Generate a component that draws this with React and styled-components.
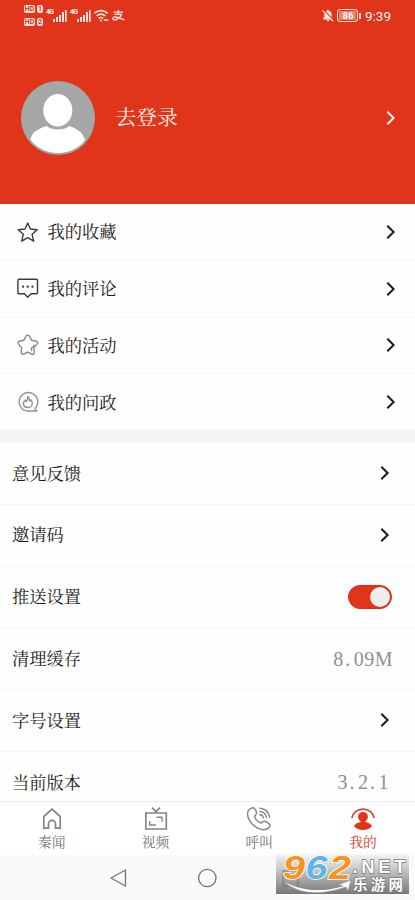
import React from "react";
import styled, { createGlobalStyle } from "styled-components";

const RED = "#e0351b";
const SERIF = '"Liberation Serif", "Noto Serif CJK SC", "Noto Serif SC", "Noto Sans CJK SC", serif';

const GlobalStyle = createGlobalStyle`
  * { box-sizing: border-box; }
  body { margin: 0; background: #fff; font-family: ${SERIF}; }
  svg { display: block; flex: none; overflow: visible; }
`;

const Screen = styled.div`
  width: 415px;
  height: 900px;
  display: flex;
  flex-direction: column;
  overflow: hidden;
  background: #fefefe;
`;

const Header = styled.header`
  height: 204px;
  flex: none;
  background: ${RED};
  color: #fff4f0;
`;

const StatusBar = styled.div`
  height: 31px;
  padding: 0 24px;
  display: flex;
  justify-content: space-between;
  font-family: Roboto, sans-serif;
`;

const StatusGroup = styled.div`
  display: flex;
  align-items: center;
  gap: ${(p) => p.$gap}px;
`;

const HdStack = styled.div`
  display: grid;
  grid-template-columns: 11px 6px;
  gap: 5px 2px;
`;

const HdBadge = styled.span`
  height: 8px;
  border-radius: 2px;
  background: #ffe3db;
  color: ${RED};
  font-size: 7px;
  font-weight: 700;
  line-height: 8px;
  text-align: center;
`;

const Signal = styled.div`
  display: flex;
  align-items: flex-start;
  height: 13px;
`;

const SignalLabel = styled.span`
  font-size: 7px;
  line-height: 7px;
  font-weight: 700;
  width: 7px;
  letter-spacing: -0.7px;
`;

const Battery = styled.span`
  width: 21px;
  height: 13px;
  margin-left: 3px;
  border: 1px solid #ffe3db;
  border-radius: 3px;
  background: #ec8270;
  font-size: 9.5px;
  line-height: 11px;
  font-weight: 700;
  text-align: center;
  box-shadow: inset 0 0 0 1px ${RED};
`;

const BatteryTip = styled.span`
  width: 1.5px;
  height: 6px;
  margin-left: 1px;
  background: #ffe3db;
`;

const Clock = styled.span`
  font-size: 13.5px;
  line-height: 16px;
  margin-left: 4px;
`;

const Profile = styled.div`
  height: 173px;
  padding: 0 18.5px 0 21px;
  display: flex;
  align-items: center;
`;

const LoginLabel = styled.span`
  flex: 1;
  margin-left: 20.5px;
  padding-top: 1px;
  font-size: 20.7px;
  line-height: 28px;
`;

const Content = styled.main`
  height: 597px;
  flex: none;
  overflow: hidden;
`;

const ListSection = styled.section`
  border-bottom: ${(p) => (p.$gap ? "12px solid #f5f5f5" : "0")};
`;

const Row = styled.div`
  height: ${(p) => p.$height}px;
  padding: 0 ${(p) => p.$right}px ${(p) => p.$bottom}px ${(p) => p.$left}px;
  display: flex;
  align-items: center;
  color: #1c1c1c;
  font-size: 17.3px;
  line-height: 24px;
  border-bottom: 1px solid #f5f5f5;
`;

const RowLabel = styled.span`
  flex: 1;
  padding-top: ${(p) => p.$drop}px;
`;

const IconSlot = styled.span`
  width: 30.5px;
`;

const ChevronSlot = styled.span`
  margin-right: 1px;
`;

const Value = styled.span`
  display: flex;
  color: #8f8f8f;
  font-family: "Liberation Serif", serif;
  font-size: 20px;
  margin-right: ${(p) => p.$end}px;
  letter-spacing: 0.5px;
`;

const Point = styled.span`
  width: 10px;
  padding-left: 1.5px;
`;

const Switch = styled.span`
  width: 44px;
  height: 24px;
  padding: 1px;
  border: 1px solid #d82f17;
  border-radius: 12px;
  background: ${RED};
  display: flex;
  justify-content: flex-end;
  align-items: center;
`;

const Knob = styled.span`
  width: 20px;
  height: 20px;
  border-radius: 50%;
  background: #eee;
`;

const TabBar = styled.nav`
  height: 54px;
  flex: none;
  border-top: 1px solid #ebebeb;
  display: grid;
  grid-template-columns: repeat(4, 1fr);
  background: #fff;
`;

const Tab = styled.div`
  display: flex;
  flex-direction: column;
  align-items: center;
  gap: 2px;
  padding-top: 5px;
  color: ${(p) => (p.$active ? "#d83b2a" : "#777")};
  font-size: 13.8px;
  line-height: 20px;
`;

const SystemBar = styled.div`
  position: relative;
  flex: 1;
  background: #fafafa;
  display: flex;
  align-items: center;
  padding-left: 110px;
  gap: 78px;
`;

const Watermark = styled.div`
  position: absolute;
  left: 276px;
  top: -3px;
  width: 133px;
  height: 42px;
  background: linear-gradient(#f6f6f600, #c9c9c9 40%, #777);
`;

const Chevron = () => (
  <svg width="12" height="16" viewBox="0 0 12 16" fill="none" stroke="currentColor" strokeWidth="2">
    <path d="M2.3 1.7 8.6 8 2.3 14.3" />
  </svg>
);

const Bars = () => (
  <svg width="14" height="13" viewBox="0 0 14 13" fill="#ffe3db">
    <path d="M0 10h2v3H0zM3 8h2v5H3zM6 6h2v7H6zM9 3h2v10H9zM12 1h1.7v12H12z" />
  </svg>
);

const Wifi = () => (
  <svg width="15" height="13" viewBox="0 0 15 13" fill="none" stroke="#ffe3db" strokeWidth="1.7">
    <path d="M.3 4.2Q7-1 13.8 4.2M2.6 6.9Q7 3.3 11.4 6.9M4.8 9.3Q7 7.7 9.2 9.3" />
    <circle cx="7" cy="11.4" r="1" fill="#ffe3db" stroke="none" />
    <path d="M9.8 11.2h4.4" />
  </svg>
);

const PayIcon = () => (
  <svg width="13" height="11" viewBox="0 0 13 11" fill="none" stroke="#ffe3db" strokeWidth="1.3">
    <path d="M1.5 2.2h9.5M6.2 0v4.4M2.5 4.4h7Q8 8.2 4 9.6 1 10.5.8 8.6.8 6.8 3.4 7q4 .6 9.2 3" />
  </svg>
);

const MutedBell = () => (
  <svg width="12" height="13" viewBox="0 0 13 13">
    <path d="M1.3 10.8V9.5L2.6 8V5Q2.6 2 5.8 1.4V.3h1.4v1.1Q10.4 2 10.4 5v3l1.3 1.5v1.3zM4.8 11.4h3.4Q7.7 12.8 6.5 12.8T4.8 11.4z" fill="#ffe3db" />
    <path d="m1.8.6 11.4 11.4" stroke={RED} strokeWidth="1.2" />
    <path d="m.4 1 11.8 11.8" stroke="#ffe3db" strokeWidth="1.2" />
  </svg>
);

const Avatar = () => (
  <svg width="74" height="74" viewBox="0 0 74 74">
    <defs>
      <clipPath id="avatar-clip"><circle cx="37" cy="37" r="35.2" /></clipPath>
    </defs>
    <circle cx="37" cy="37" r="37" fill="#a5a7a6" />
    <g clipPath="url(#avatar-clip)" fill="#fff">
      <ellipse cx="36.8" cy="29.3" rx="14.5" ry="16.3" />
      <path d="M9 59Q11 49 25.5 45 30 48.5 37 48.5T48.5 45Q61 49 64.3 59 56 72 37 72T9 59z" />
    </g>
  </svg>
);

const Icon = ({ children, size = 22, width = 1.4, color = "#3b3b3b" }) => (
  <svg width={size} height={size} viewBox="0 0 22 22" fill="none" stroke={color} strokeWidth={width} strokeLinejoin="round" strokeLinecap="round">
    {children}
  </svg>
);

const StarIcon = () => (
  <Icon><path d="m10.7 2 2.7 6 6.8.7-5.1 4.6 1.6 6.8-6-3.5-6 3.5 1.6-6.8L1.2 8.7 8 8z" /></Icon>
);
const CommentIcon = () => (
  <Icon>
    <path d="M2.2 1.2h17q1.3 0 1.3 1.3v12q0 1.3-1.3 1.3H14l-3.3 3.4-3.3-3.4H2.2q-1.3 0-1.3-1.3v-12q0-1.3 1.3-1.3z" />
    <path d="M6 8.7h.1M10.7 8.7h.1M15.4 8.7h.1" strokeWidth="2.2" />
  </Icon>
);
const ActivityIcon = () => (
  <Icon color="#8a8a8a">
    <path d="M9 2.2q1.7-2.2 3.4 0l2.2 4 4.7 1q2.3.9.8 2.9l-3.2 3.5.4 4.8q-.3 2.5-2.6 1.6l-4-1.9-4 1.9q-2.5.8-2.5-1.6l.5-4.8-3.2-3.5Q.1 8.2 2.3 7.2l4.6-1z" />
    <path d="M17 11q-.1 2.4-2.5 2.8-.3 1.3.3 2.6" />
  </Icon>
);
const FireIcon = () => (
  <Icon color="#949494">
    <path d="M18 17.5A9.3 9.3 0 1 0 13.3 20H20q-1.6-.6-2-2.5z" />
    <path d="M10.7 5.4q2.2 1.8 1.8 4.7l1.6-1.2q1.7 2.4 1 4.4-.8 3.2-4.4 3.2-3.8-.2-4.4-3.5-.1-2.2 2-4l.5 1.6q2.4-1.4 1.9-5.2z" />
  </Icon>
);

const HomeIcon = () => (
  <svg width="24" height="24" viewBox="0 0 24 24" fill="none" stroke="#858585" strokeWidth="1.7">
    <path d="M3.8 9.5 12 2.2l8.2 7.3v11.7h-4.7v-4.4a3.5 3.5 0 0 0-7 0v4.4H3.8z" />
  </svg>
);
const VideoIcon = () => (
  <svg width="24" height="24" viewBox="0 0 24 24" fill="none" stroke="#858585" strokeWidth="1.7">
    <path d="M1.8 6h20.5v16H1.8zM8 .7l4 4 4-4" />
    <path d="M5.7 14v4H12M12.5 10.2H18v4.5" strokeWidth="1.4" />
  </svg>
);
const CallIcon = () => (
  <svg width="24" height="24" viewBox="0 0 24 24" fill="none" stroke="#858585" strokeWidth="1.4" strokeLinecap="round">
    <path d="M2.5 2.2Q5.7-.1 7.5 1.4q2.2 2.5 2 5.1-.2 1.2-2 2.8 1.4 5 6.6 6.8 2-2 3.3-1.8 2.8.4 5.4 3.2.8 1.6-1.3 3.4-4 3.5-10.6.2Q4.3 17.9 1.4 11.2-.8 5 2.5 2.2z" />
    <path d="M13 1.2q8.4.7 9.6 9.2M13 4.5q5.6.6 6.4 6M13 7.8q2.8.3 3.3 3" />
  </svg>
);
const MineIcon = () => (
  <svg width="24" height="24" viewBox="0 0 24 24" fill="#e0351b">
    <path d="M.8 11.2a11.3 10.5 0 0 1 22.4 0" fill="none" stroke="#d83b2a" strokeWidth="1.6" />
    <circle cx="12" cy="9.8" r="4.9" />
    <path d="M2.8 18.7Q6.2 15.2 9.7 15v-2h4.6v2q3.5.2 6.9 3.7-3.3 4.3-9.2 4.3t-9.2-4.3z" />
  </svg>
);

const WatermarkLogo = () => (
  <svg width="133" height="42" viewBox="0 0 133 42">
    <rect x="7" y="19" width="15" height="15" fill="none" stroke="#777" />
    <g fontFamily="Liberation Sans, sans-serif" fontWeight="700" fontStyle="italic" fontSize="33" stroke="#fff" strokeWidth="1.6" paintOrder="stroke">
      <text x="7" y="26.5" fill="#f7931e" textLength="22" lengthAdjust="spacingAndGlyphs">9</text>
      <text x="29.5" y="26.5" fill="#5fb5e5" textLength="22" lengthAdjust="spacingAndGlyphs">6</text>
      <text x="53" y="26.5" fill="#f7931e" textLength="22" lengthAdjust="spacingAndGlyphs">2</text>
    </g>
    <path d="M7 29Q35 44 67 34l-5-1 13-5-3 11-2-4Q29 49 7 29z" fill="#fff" stroke="#888" strokeWidth=".6" />
    <g fill="#fff" stroke="#777" strokeWidth="1.4" paintOrder="stroke" fontWeight="700">
      <text x="76.5" y="20.5" fontFamily="Liberation Sans, sans-serif" fontSize="18.5" textLength="53">.NET</text>
      <text x="77" y="38" fontFamily="Noto Sans CJK SC, sans-serif" fontSize="14.5" textLength="50">乐游网</text>
    </g>
  </svg>
);

const personalRows = [
  { label: "我的收藏", icon: <StarIcon /> },
  { label: "我的评论", icon: <CommentIcon /> },
  { label: "我的活动", icon: <ActivityIcon /> },
  { label: "我的问政", icon: <FireIcon /> },
];

const settingRows = [
  { label: "意见反馈", end: <ChevronSlot><Chevron /></ChevronSlot> },
  { label: "邀请码", end: <ChevronSlot><Chevron /></ChevronSlot> },
  { label: "推送设置", end: <Switch><Knob /></Switch> },
  { label: "清理缓存", end: <Value $end={-1}>8<Point>.</Point>09M</Value> },
  { label: "字号设置", end: <ChevronSlot><Chevron /></ChevronSlot> },
  { label: "当前版本", end: <Value $end={3}>3<Point>.</Point>2<Point>.</Point>1</Value> },
];

const tabs = [
  { label: "秦闻", icon: <HomeIcon /> },
  { label: "视频", icon: <VideoIcon /> },
  { label: "呼叫", icon: <CallIcon /> },
  { label: "我的", icon: <MineIcon />, active: true },
];

export default function App() {
  return (
    <>
      <GlobalStyle />
      <Screen>
        <Header>
          <StatusBar>
            <StatusGroup $gap={3}>
              <HdStack>
                <HdBadge>HD</HdBadge><HdBadge>1</HdBadge>
                <HdBadge>HD</HdBadge><HdBadge>2</HdBadge>
              </HdStack>
              <Signal><SignalLabel>4G</SignalLabel><Bars /></Signal>
              <Signal><SignalLabel>4G</SignalLabel><Bars /></Signal>
              <Wifi />
              <PayIcon />
            </StatusGroup>
            <StatusGroup $gap={0}>
              <MutedBell />
              <Battery>86</Battery>
              <BatteryTip />
              <Clock>9:39</Clock>
            </StatusGroup>
          </StatusBar>
          <Profile>
            <Avatar />
            <LoginLabel>去登录</LoginLabel>
            <Chevron />
          </Profile>
        </Header>
        <Content>
          <ListSection $gap>
            {personalRows.map((r) => (
              <Row key={r.label} $height={56.8} $left={17} $right={18.5} $bottom={0}>
                <IconSlot>{r.icon}</IconSlot>
                <RowLabel $drop={3}>{r.label}</RowLabel>
                <Chevron />
              </Row>
            ))}
          </ListSection>
          <ListSection>
            {settingRows.map((r) => (
              <Row key={r.label} $height={61.8} $left={12} $right={23} $bottom={0.6}>
                <RowLabel $drop={2.5}>{r.label}</RowLabel>
                {r.end}
              </Row>
            ))}
          </ListSection>
        </Content>
        <TabBar>
          {tabs.map((t) => (
            <Tab key={t.label} $active={t.active}>
              {t.icon}
              {t.label}
            </Tab>
          ))}
        </TabBar>
        <SystemBar>
          <svg width="17" height="18" viewBox="0 0 17 18" fill="none" stroke="#757575" strokeWidth="1.3" strokeLinejoin="round">
            <path d="M15.5 1v16L1 9z" />
          </svg>
          <svg width="20" height="20" viewBox="0 0 20 20" fill="none" stroke="#757575" strokeWidth="1.3">
            <circle cx="2.3" cy="10" r="8.7" />
          </svg>
          <Watermark><WatermarkLogo /></Watermark>
        </SystemBar>
      </Screen>
    </>
  );
}
